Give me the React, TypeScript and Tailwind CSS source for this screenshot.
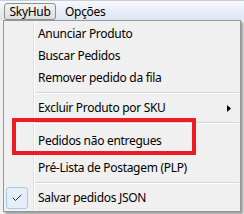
import { Check } from "lucide-react";

type Row =
  | { kind: "item"; label: string; h?: string; sub?: boolean; checked?: boolean }
  | { kind: "sep" };

const rows: Row[] = [
  { kind: "item", label: "Anunciar Produto" },
  { kind: "item", label: "Buscar Pedidos" },
  { kind: "item", label: "Remover pedido da fila" },
  { kind: "sep" },
  { kind: "item", label: "Excluir Produto por SKU", sub: true },
  { kind: "sep" },
  { kind: "item", label: "Pedidos não entregues", h: "tall" },
  { kind: "item", label: "Pré-Lista de Postagem (PLP)" },
  { kind: "sep" },
  { kind: "item", label: "Salvar pedidos JSON", checked: true },
];

export default function App() {
  return (
    <div className="relative w-[244px] h-[214px] overflow-hidden bg-[#f0f0f0] text-[12px] tracking-[-0.3px] text-black font-['Noto_Sans',sans-serif]">
      {/* menu bar */}
      <div className="h-[20px] flex items-start bg-[linear-gradient(to_bottom,#f6f8fb,#dce4f2)] border-t border-[#c9cfd9]">
        <div className="ml-[4px] mt-[2px] h-[17px] w-[52px] flex items-center justify-center rounded-[3px] border border-[#8e8f8f] bg-[linear-gradient(to_bottom,#f2f2f2,#dedede)] leading-none">
          SkyHub
        </div>
        <div className="ml-[9px] mt-[2px] h-[17px] flex items-center leading-none">Opções</div>
      </div>

      {/* dropdown */}
      <div className="ml-[3px] w-[238px] border border-[#979797] py-[2px] shadow-[2px_2px_2px_rgba(0,0,0,0.35)] bg-[linear-gradient(to_right,#f0f0f0_29px,#e2e3e3_29px,#e2e3e3_30px,#ffffff_30px,#ffffff_31px,#f0f0f0_31px)]">
        {rows.map((r, i) =>
          r.kind === "sep" ? (
            <div key={i} className="h-[8px] flex items-center pl-[31px] pr-[1px]">
              <div className="w-full h-[2px] border-t border-[#d7d7d7] border-b border-b-white" />
            </div>
          ) : (
            <div
              key={i}
              className={`flex items-center ${r.h === "tall" ? "h-[30px] pb-[2px]" : "h-[22px]"}`}
            >
              <div className="w-[30px] h-full flex items-center">
                {r.checked && (
                  <div className="ml-[2px] w-[22px] h-[22px] rounded-[3px] border border-[#a8c8ee] bg-[#e6eefa] flex items-center justify-center">
                    <Check size={12} strokeWidth={2} className="text-[#0c2d7c]" />
                  </div>
                )}
              </div>
              <span className="pl-[4px] flex-1 leading-none">{r.label}</span>
              {r.sub && (
                <svg width="4" height="7" viewBox="0 0 4 7" className="mr-[9px]">
                  <path d="M0 0 L4 3.5 L0 7 Z" fill="#000" />
                </svg>
              )}
            </div>
          )
        )}
      </div>

      {/* red highlight annotation */}
      <div className="absolute left-[12px] top-[118px] w-[184px] h-[37px] border-[4px] border-[#ed1c24]" />
    </div>
  );
}
